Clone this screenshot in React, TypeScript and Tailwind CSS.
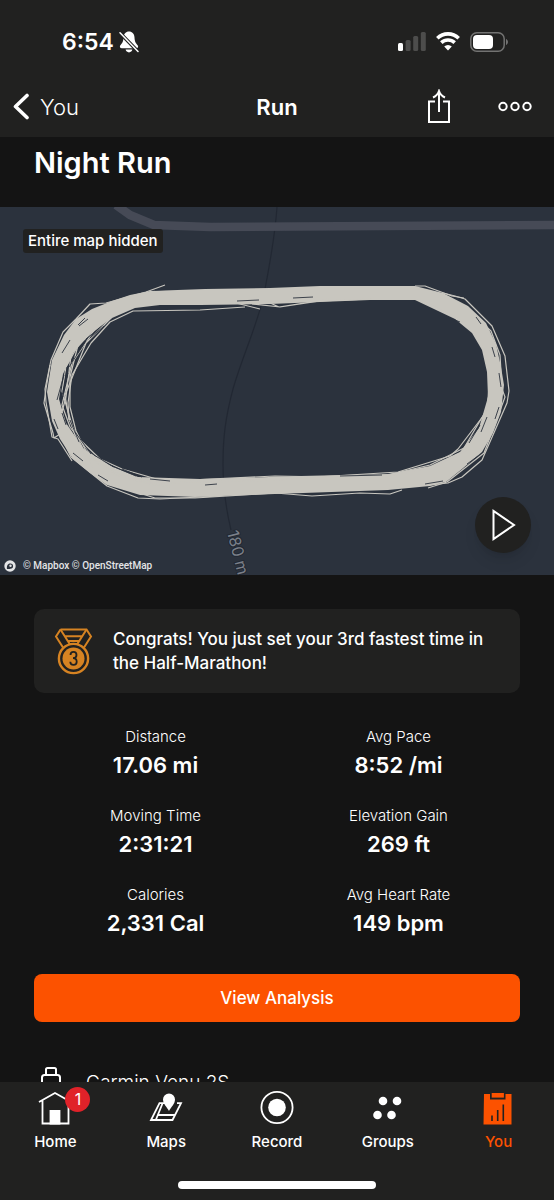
import type { ReactNode } from "react";

const stats = [
  { label: "Distance", value: "17.06 mi" },
  { label: "Avg Pace", value: "8:52 /mi" },
  { label: "Moving Time", value: "2:31:21" },
  { label: "Elevation Gain", value: "269 ft" },
  { label: "Calories", value: "2,331 Cal" },
  { label: "Avg Heart Rate", value: "149 bpm" },
];

function StatusBar() {
  return (
    <div className="flex h-[77px] items-center justify-between pt-[6px] pr-[45px] pl-[62px]">
      <div className="flex items-center gap-[5px]">
        <span className="font-[Inter,sans-serif] text-[23px] leading-7 font-semibold">6:54</span>
        <svg width="20" height="22" viewBox="0 0 20 22" fill="none">
          <path
            d="M10 .5C6.800.5 4.600 3 4.500 6.500 4.400 11 2.800 12.500 1.200 14.600.4 15.800 1 17.300 2.800 17.300h14.400c1.800 0 2.400-1.500 1.600-2.700-1.600-2.100-3.200-3.600-3.300-8.100C15.400 3 13.200.5 10 .5zM6.600 18.600h6.800c-.4 1.800-1.700 2.800-3.400 2.800s-3-1-3.400-2.800z"
            fill="#fff"
          />
          <path d="M.5 1.500l19 19.500" stroke="#212120" strokeWidth="3.600" />
          <path d="M1 1.800l18 18.600" stroke="#fff" strokeWidth="1.500" strokeLinecap="round" />
        </svg>
      </div>
      <div className="flex items-center gap-[10px]">
        <svg width="28" height="19" viewBox="0 0 28 19">
          <rect x="0" y="11" width="5" height="8" rx="1.5" fill="#fff" />
          <rect x="7.6" y="8" width="5" height="11" rx="1.5" fill="#4d4d4c" />
          <rect x="15.2" y="4" width="5" height="15" rx="1.5" fill="#4d4d4c" />
          <rect x="22.8" y="0" width="5" height="19" rx="1.5" fill="#4d4d4c" />
        </svg>
        <svg width="24" height="19" viewBox="0 0 24 19" fill="none" stroke="#fff" strokeWidth="3.6">
          <path d="M1.3 6.2a15.4 15.4 0 0 1 21.4 0" />
          <path d="M5.3 10.6a9.8 9.8 0 0 1 13.4 0" />
          <path d="M12 18.4l3.8-3.9a5.4 5.4 0 0 0-7.6 0z" fill="#fff" stroke="none" />
        </svg>
        <svg width="39" height="20" viewBox="0 0 39 20">
          <rect x="0.8" y="0.8" width="33.4" height="18.4" rx="6" fill="none" stroke="#737372" strokeWidth="1.5" />
          <rect x="3" y="3" width="20" height="14" rx="4" fill="#fff" />
          <path d="M36 7v6c2.6-1 2.6-5 0-6z" fill="#737372" />
        </svg>
      </div>
    </div>
  );
}

function Header() {
  return (
    <header className="shrink-0 bg-[#212120]">
      <StatusBar />
      <div className="grid h-[60px] grid-cols-3 items-center">
        <button className="flex items-center gap-[10px] pl-3 text-left text-[22px] leading-7 font-light">
          <svg width="18" height="28" viewBox="0 0 18 28" fill="none" stroke="#fff" strokeWidth="3.6" strokeLinecap="round">
            <path d="M15 2.500L3.500 13.500 15 24.500" strokeLinejoin="round" />
          </svg>
          You
        </button>
        <h1 className="text-center text-[22px] leading-7 font-semibold">Run</h1>
        <div className="flex items-center justify-end gap-[46px] pr-[22px]">
          <button aria-label="Share">
            <svg width="24" height="36" viewBox="0 0 24 36" fill="none" stroke="#fff" strokeWidth="2">
              <path d="M7 12.500H1v20.500h20V12.500h-6" />
              <path d="M11 23V2" />
              <path d="M5 8.500c3.500-1.500 5-3.500 6-6.500 1 3 2.500 5 6 6.500" />
            </svg>
          </button>
          <button aria-label="More options">
            <svg width="34" height="12" viewBox="0 0 34 12" fill="none" stroke="#fff" strokeWidth="2">
              <circle cx="5" cy="5.500" r="3.700" />
              <circle cx="17" cy="5.500" r="3.700" />
              <circle cx="29" cy="5.500" r="3.700" />
            </svg>
          </button>
        </div>
      </div>
    </header>
  );
}

function RouteMap() {
  return (
    <section className="relative overflow-hidden bg-[#2b323d]">
      <svg viewBox="0 0 554 368" className="block w-full" fill="none" aria-label="Route map">
        <path d="M277 0c-2 30-7 56-12 82-5 30-22 65-32 100-8 30-10 50-10 75 0 20 3 45 8 66" stroke="#222833" strokeWidth="1.200" />
        <path d="M116-2L130 8 154 18 210 20 554 18" stroke="#464a56" strokeWidth="8.500" strokeLinejoin="round" />

        {/* laps piled on top of each other */}
        <path
          fill="#c8c6bf"
          fillRule="evenodd"
          d="M150 84L205 82 270 81 320 79 415 79 443 86 468 99 486 116 496 137 501 160 504 178 501 205 493 226 482 245 462 262 446 275 430 279 388 283 275 287 195 290 140 288 107 278 90 266 73 252 60 232 52 214 47 185 52 153 64 128 76 112 92 102 112 94 130 88zM135 101L112 111 90 127 74 145 63 167 59 192 66 216 84 242 111 259 138 270 200 272 300 269 388 267 430 259 460 245 479 221 488 190 487 165 482 143 472 126 455 112 415 93 370 93 320 95 270 97 200 98 160 98z"
        />
        <g stroke="#c8c6bf" strokeWidth="1.200" strokeLinejoin="round">
          <path d="M165 78L146 85 106 96 90 97 76 112 63 125 51 153 45 182 46 195 52 230 58 232 72 254" />
          <path d="M50 158L46 182 44 196 53 226 54 231 60 227 71 250 107 279 138 291 160 292 220 289" />
          <path d="M245 100L200 103 133 104 110 115 91 136 72 168 68 196 69 212 83 242 117 267 160 276 280 273 300 271 398 265 450 249 458 242 487 204 489 180" />
          <path d="M112 110L86 136 74 166 65 188 69 212 82 244 116 268 150 277 170 280" />
          <path d="M104 115L78 138 70 170 70 200 76 224 90 252 122 270 170 280" />
          <path d="M95 122L72 156 62 198 70 220 96 254 130 272" />
          <path d="M84 128L66 160 62 184 75 228 100 252 122 262 160 273" />
          <path d="M72 140L66 190 60 212 78 236 94 262" />
          <path d="M228 94L240 97 260 102M268 95L279 100 329 92M252 97L280 100 320 94 372 92" />
          <path d="M443 86L455 89 465 92 492 119 505 149 509 184 507 196 493 228 482 253 462 270 448 276 430 278" />
          <path d="M415 79L425 79 452 89 464 91" />
          <path d="M418 92L458 112 474 124 486 146" />
          <path d="M478 112L491 124 500 148 502 182 505 190 494 220 484 246 447 275 428 281" />
          <path d="M489 186L487 202 464 241 430 258 388 268 340 270" />
          <path d="M489 206L466 243 432 260 390 269" />
          <path d="M133 284L155 291 195 291 275 286 312 289 360 286 390 287 402 283" />
          <path d="M190 273L275 269 330 270" />
        </g>
        {/* gaps between the laps */}
        <g stroke="#2b323d" strokeWidth="0.900">
          <path d="M88 112l-9 7M70 133l-8 13M86 134l-17 26M104 119l-14 12M64 168l-7 25M68 166l-7 26M67 160l-4 30M62 206l4 12M75 225l16 22M94 248l20 12M70 213l9 22" />
          <path d="M112 259l24 10M122 262l20 8M150 272l20 2M205 278l12-1M237 94l22-1M155 83l20-1M293 91l20-1" />
          <path d="M450 111l10 4M476 110l5 7M492 140l3 10M499 166l2 14M499 200l-4 12M487 210l-6 15M480 218l-11 18M478 249l-11 8M443 274l-18 3M340 269l42-1" />
          <path d="M54 212l4 10M73 246l10 8M98 268l10 6M96 124l-10 8M78 118l7-7" />
        </g>
        <text
          transform="translate(227 325) rotate(76)"
          fill="#7b808a"
          fontSize="16"
          fontFamily="Inter, sans-serif"
          stroke="#222833"
          strokeWidth="2"
          paintOrder="stroke"
        >
          180 m
        </text>
      </svg>

      <p className="absolute top-[22px] left-[23px] rounded-[3px] bg-[#212120] px-[5px] text-[15px] leading-6 font-medium">
        Entire map hidden
      </p>

      <p className="absolute bottom-px left-1 flex items-center gap-[7px] font-[Roboto,sans-serif] text-[10px] leading-4 font-medium text-[#e4e5e7]">
        <svg width="12" height="12" viewBox="0 0 12 12">
          <circle cx="6" cy="6" r="5.700" fill="#e4e5e7" />
          <path d="M3 9c-.4-3 .4-5.600 3.400-5.600a2.700 2.700 0 0 1 0 5.400c-1 .3-2.200.3-3.400.2z" fill="#2b323d" />
          <circle cx="6.500" cy="5.800" r="1.200" fill="#e4e5e7" />
        </svg>
        © Mapbox © OpenStreetMap
      </p>

      <button
        aria-label="Play route"
        className="absolute right-[23px] bottom-[22px] flex size-14 items-center justify-center rounded-full bg-[#212120] shadow-lg"
      >
        <svg width="26" height="34" viewBox="0 0 26 34" fill="none" stroke="#fff" strokeWidth="2">
          <path d="M3.500 3v28L24 17z" />
        </svg>
      </button>
    </section>
  );
}

function Medal() {
  return (
    <svg width="39" height="47" viewBox="0 0 39 47" fill="none" stroke="#d68322" strokeWidth="2">
      <path d="M6.500 1.500h26l4.500 7-7 11M6.500 1.500L2 8.500l7 11" />
      <path d="M6.500 1.500l9.500 15M32.500 1.500l-9.500 15M10.500 8.200h18M13.500 13h12" />
      <circle cx="19.500" cy="30.500" r="14.600" strokeWidth="2.400" />
      <circle cx="19.500" cy="30.500" r="11" fill="#d68322" stroke="none" />
      <path
        d="M16.500 27c0-4.200 6-4.200 6 0 0 2.200-1.500 3.200-3.500 3.200 2.200 0 3.700 1.100 3.700 3.500 0 4.300-6.400 4.300-6.400 0"
        stroke="#212120"
        strokeWidth="1.800"
      />
    </svg>
  );
}

function Tab({ label, active, children }: { label: string; active?: boolean; children: ReactNode }) {
  return (
    <a
      href="#"
      className={
        active
          ? "flex flex-col items-center gap-1 text-[15px] leading-6 font-medium text-[#fc5200]"
          : "flex flex-col items-center gap-1 text-[15px] leading-6 font-medium text-white"
      }
    >
      <span className="relative flex h-9 items-center">{children}</span>
      {label}
    </a>
  );
}

function TabBar() {
  return (
    <nav className="shrink-0 bg-[#212120] pt-2 pb-[11px]">
      <div className="grid grid-cols-5">
        <Tab label="Home">
          <svg width="34" height="36" viewBox="0 0 34 36" fill="none" stroke="#fff" strokeWidth="1.800">
            <path d="M1 12L17 3l16 9M4.500 10.500v23h26v-23" />
            <path d="M12.500 21h9v12.500h-9z" fill="#fff" />
          </svg>
          <span className="absolute -top-[3px] left-[27px] size-[25px] rounded-full bg-[#e02229] text-center text-[16px] leading-[25px] font-normal text-white">
            1
          </span>
        </Tab>
        <Tab label="Maps">
          <svg width="34" height="36" viewBox="0 0 34 36" fill="none" stroke="#fff" strokeWidth="1.800">
            <path d="M16 13.200h-5.500L2 30h21.500L32 13.200h-4M13.500 13.500L7 29.500M9.500 25h16.500" />
            <path d="M20 21c-2-4-6-7-6-11.500a6 6 0 0 1 12 0c0 4.500-4 7.500-6 11.500z" fill="#fff" stroke="none" />
          </svg>
        </Tab>
        <Tab label="Record">
          <svg width="34" height="36" viewBox="0 0 34 36">
            <circle cx="17" cy="17.500" r="15.600" fill="none" stroke="#fff" strokeWidth="1.800" />
            <circle cx="17" cy="17.500" r="8.800" fill="#fff" />
          </svg>
        </Tab>
        <Tab label="Groups">
          <svg width="34" height="36" viewBox="0 0 34 36" fill="#fff">
            <circle cx="12" cy="11" r="4.300" />
            <circle cx="26" cy="11" r="4.300" />
            <circle cx="6.500" cy="25" r="4.300" />
            <circle cx="20.500" cy="25" r="4.300" />
          </svg>
        </Tab>
        <Tab label="You" active>
          <svg width="34" height="36" viewBox="0 0 34 36" fill="none">
            <path d="M2 4h6v5.500h15.500V4h6v30.500h-28z" fill="#fc5200" />
            <path d="M9.700 3h12.200v4.600H9.700z" fill="#fc5200" />
            <path d="M10 25.500V31M15.700 20v11M21.300 14.500V31" stroke="#212120" strokeWidth="1.600" />
          </svg>
        </Tab>
      </div>
      <div className="mx-auto mt-[27px] h-2 w-[198px] rounded-full bg-white" />
    </nav>
  );
}

export default function App() {
  return (
    <div className="flex h-dvh flex-col bg-[#141414] font-[Inter,sans-serif] text-white">
      <Header />
      <main className="min-h-0 flex-1 overflow-hidden">
        <h2 className="px-[34px] pt-[6px] pb-6 text-[29px] leading-10 font-semibold">Night Run</h2>
        <RouteMap />

        <div className="px-[34px] pt-[34px]">
          <div className="flex items-center gap-5 rounded-[10px] bg-[#212120] py-[18px] pr-4 pl-5">
            <Medal />
            <p className="flex-1 text-[17px] leading-6 font-medium">
              Congrats! You just set your 3rd fastest time in the Half-Marathon!
            </p>
          </div>

          <dl className="mt-8 grid grid-cols-2 gap-y-[23px] text-center">
            {stats.map((stat) => (
              <div key={stat.label}>
                <dt className="text-[15px] leading-6 font-light">{stat.label}</dt>
                <dd className="text-[22px] leading-8 font-semibold">{stat.value}</dd>
              </div>
            ))}
          </dl>

          <button className="mt-[35px] h-12 w-full rounded-lg bg-[#fc5200] text-[17px] leading-6 font-medium">
            View Analysis
          </button>

          <div className="mt-11 flex items-center gap-[25px] pl-[7px] text-[19px] leading-8 font-light">
            <svg width="20" height="34" viewBox="0 0 20 34" fill="none" stroke="#fff" strokeWidth="2">
              <path d="M5 9V3.500Q5 2 6.500 2h7Q15 2 15 3.500V9M5 25v5.500Q5 32 6.500 32h7q1.500 0 1.500-1.500V25" />
              <rect x="1" y="9" width="18" height="16" rx="2.500" />
            </svg>
            Garmin Venu 2S
          </div>
        </div>
      </main>
      <TabBar />
    </div>
  );
}
